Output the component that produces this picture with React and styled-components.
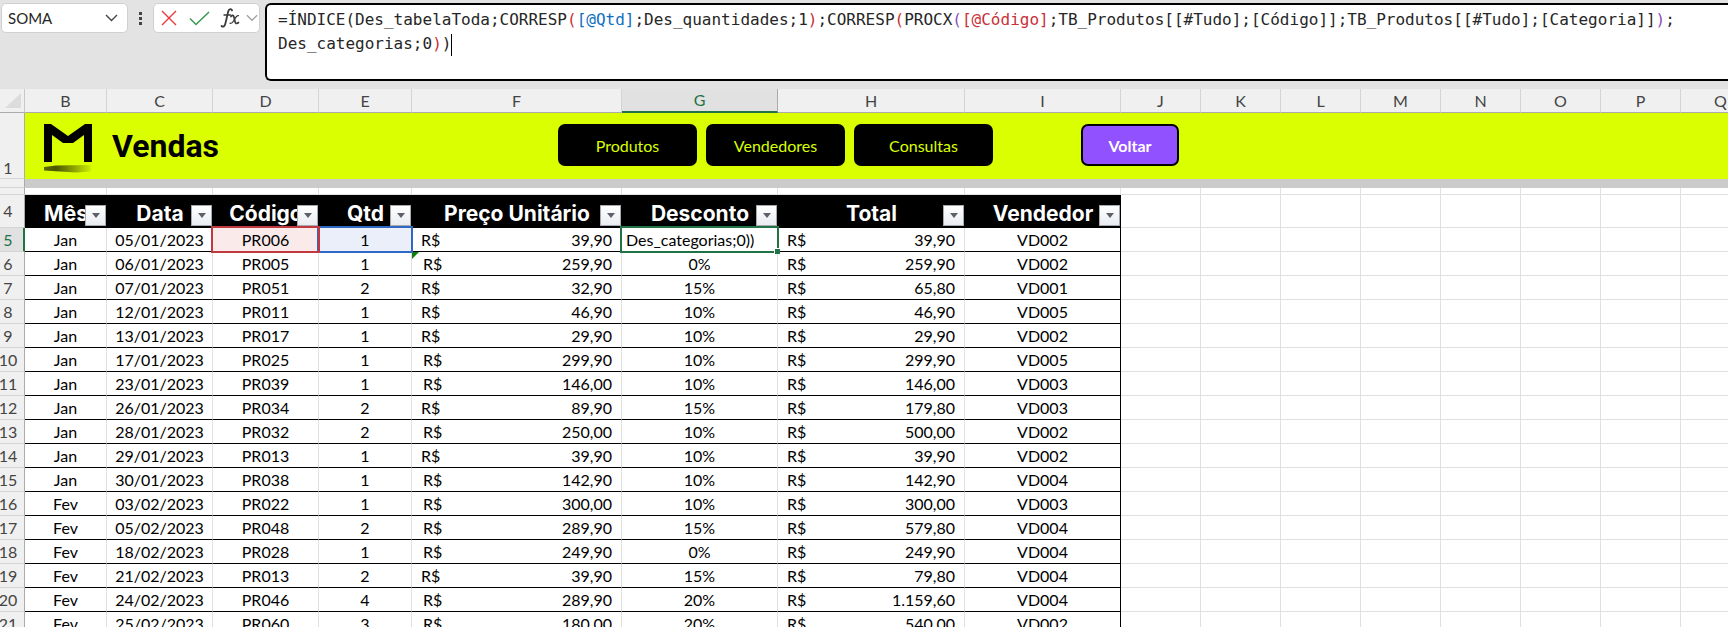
import React from "react";
import styled, { createGlobalStyle, css } from "styled-components";

const GlobalStyle = createGlobalStyle`
  * {
    box-sizing: border-box;
  }

  body {
    margin: 0;
    background: #fff;
    color: #000;
    font-family: Lato, "Open Sans", sans-serif;
    font-size: 16px;
    overflow: hidden;
  }

  button,
  input {
    margin: 0;
    padding: 0;
    border: 0;
    background: none;
    color: inherit;
    font: inherit;
    outline: none;
  }
`;

const Page = styled.div`
  height: 100vh;
  overflow: hidden;
`;

/* formula bar */

const FormulaBar = styled.header`
  display: flex;
  align-items: flex-start;
  height: 89px;
  padding: 3px 0 0 1px;
  background: #e3e3e3;
`;

const NameBox = styled.div`
  display: flex;
  align-items: center;
  width: 127px;
  height: 30px;
  padding: 0 8px 0 6px;
  border: 1px solid #d0d0d0;
  border-radius: 5px;
  background: #fff;
`;

const NameInput = styled.input`
  flex: 1;
  min-width: 0;
  color: #262626;
  font-size: 15px;
`;

const IconButton = styled.button`
  display: flex;
  align-items: center;
  justify-content: center;
  width: ${(props) => props.$width}px;
  height: 28px;
`;

const Grip = styled.div`
  display: flex;
  flex-direction: column;
  align-items: center;
  justify-content: center;
  gap: 2px;
  width: 25px;
  height: 30px;
`;

const GripDot = styled.span`
  width: 3px;
  height: 3px;
  background: #444;
`;

const Actions = styled.div`
  display: flex;
  align-items: center;
  width: 107px;
  height: 30px;
  border: 1px solid #d0d0d0;
  border-radius: 5px;
  background: #fff;
`;

/* each part of the formula has its own colour, which a textarea can't show */
const FormulaBox = styled.div`
  flex: 1;
  min-width: 0;
  height: 78px;
  margin-left: 5px;
  padding: 3px 0 0 11px;
  border: 2px solid #000;
  border-right: 0;
  border-radius: 6px 0 0 6px;
  background: #fff;
  color: #262626;
  font-family: "DejaVu Sans Mono", monospace;
  font-size: 16px;
  line-height: 24px;
  white-space: pre;
  outline: none;
  overflow: hidden;
`;

const Token = styled.span`
  color: ${(props) => props.$color};
`;

const Caret = styled.span`
  display: inline-block;
  width: 1px;
  height: 22px;
  background: #000;
  vertical-align: middle;
`;

/* sheet */

const Sheet = styled.table`
  width: 100%;
  table-layout: fixed;
  border-collapse: separate;
  border-spacing: 0;

  th,
  td {
    padding: 0;
  }
`;

const Col = styled.col`
  width: ${(props) => (props.$width ? `${props.$width}px` : "auto")};
`;

const Corner = styled.td`
  height: 24px;
  border-right: 1px solid #c8c8c8;
  border-bottom: 1px solid #ababab;
  background: #f0f0f0;
`;

const CornerIcon = styled.svg`
  display: block;
  margin-left: 5px;
`;

const ColHead = styled.th`
  height: 24px;
  border-right: 1px solid #d4d4d4;
  border-bottom: 1px solid #ababab;
  background: #f0f0f0;
  color: #444;
  font-weight: 400;
  line-height: 20px;
  text-align: center;

  ${(props) =>
    props.$active &&
    css`
      border-right-color: #ababab;
      border-bottom: 2px solid #217346;
      background: #e1e1e1;
      color: #217346;
    `}
`;

const RowHead = styled.th`
  border-right: 1px solid #ababab;
  border-bottom: 1px solid #d4d4d4;
  background: #f0f0f0;
  color: #444;
  font-weight: 400;
  line-height: 20px;
  text-align: center;
  vertical-align: ${(props) => props.$align || "middle"};

  ${(props) =>
    props.$active &&
    css`
      border-right: 2px solid #217346;
      background: #e1e1e1;
      color: #217346;
    `}
`;

const RowNumber = styled.span`
  display: flex;
  justify-content: center;
  width: 16px;
`;

const BannerCell = styled.td`
  height: 66px;
  background: #d9ff00;
`;

const Banner = styled.div`
  display: flex;
  align-items: flex-start;
  height: 66px;
  padding: 11px 0 0 19px;
`;

const Brand = styled.div`
  display: flex;
  align-items: flex-start;
  gap: 20px;
  width: 514px;
`;

const Title = styled.h1`
  margin: 0;
  font-family: Roboto, sans-serif;
  font-size: 32px;
  font-weight: 700;
  line-height: 44px;
`;

const Nav = styled.nav`
  display: flex;
  gap: 9px;
`;

const NavButton = styled.button`
  width: 139px;
  height: 42px;
  border-radius: 7px;
  background: #000;
  color: #d9ff00;
`;

const BackButton = styled.button`
  width: 98px;
  height: 42px;
  margin-left: 88px;
  border: 2px solid #000;
  border-radius: 7px;
  background: #9251ff;
  color: #fff;
  font-weight: 700;
`;

const Divider = styled.td`
  height: 9px;
  background: #cbcbcb;
`;

const Blank = styled.td`
  height: ${(props) => props.$height || 24}px;
  border-right: 1px solid #e0e0e0;
  border-bottom: 1px solid #e0e0e0;
`;

const FieldHead = styled.th`
  height: 33px;
  background: #000;
  color: #fff;
`;

const Field = styled.div`
  display: grid;
  align-items: center;
  height: 33px;
`;

const FieldName = styled.span`
  grid-area: 1 / 1;
  justify-self: center;
  padding-top: 4px;
  font-family: Inter, sans-serif;
  font-size: 21px;
  font-weight: 700;
  line-height: 24px;
  white-space: nowrap;
`;

const FilterButton = styled.button`
  display: flex;
  grid-area: 1 / 1;
  align-items: center;
  align-self: end;
  justify-content: center;
  justify-self: end;
  width: 21px;
  height: 21px;
  margin: 0 1px 2px 0;
  border: 1px solid #a5a9b0;
  background: linear-gradient(#fff, #e9ecf1);
`;

const Cell = styled.td`
  position: relative;
  height: 24px;
  border-right: 1px solid ${(props) => (props.$last ? "#000" : "#e0e0e0")};
  border-bottom: 1px solid #000;
  background: ${(props) => props.$fill || "#fff"};
  line-height: 20px;
  text-align: center;
  white-space: nowrap;

  ${(props) =>
    props.$frame &&
    css`
      &::after {
        content: "";
        position: absolute;
        z-index: ${props.$layer || 1};
        inset: -2px;
        border: 2px solid ${props.$frame};
        pointer-events: none;
      }
    `}
`;

const Money = styled.div`
  display: flex;
  justify-content: space-between;
  padding: 0 9px 0 ${(props) => (props.$wide ? 11 : 9)}px;
`;

const CellInput = styled.input`
  display: block;
  width: 100%;
  height: 20px;
  padding-left: 4px;
`;

const FillHandle = styled.span`
  position: absolute;
  z-index: 2;
  right: -3px;
  bottom: -3px;
  width: 6px;
  height: 6px;
  border: solid #fff;
  border-width: 1px 0 0 1px;
  background: #217346;
`;

const ErrorMark = styled.svg`
  position: absolute;
  top: 0;
  left: 0;
`;

const columns = [
  ["B", 82],
  ["C", 106],
  ["D", 106],
  ["E", 93],
  ["F", 210],
  ["G", 156],
  ["H", 187],
  ["I", 156],
  ["J", 80],
  ["K", 80],
  ["L", 80],
  ["M", 80],
  ["N", 80],
  ["O", 80],
  ["P", 80],
  ["Q", 80],
];

const spare = ["J", "K", "L", "M", "N", "O", "P", "Q", "rest"];

const fields = ["Mês", "Data", "Código", "Qtd", "Preço Unitário", "Desconto", "Total", "Vendedor"];

const sales = [
  ["Jan", "05/01/2023", "PR006", "1", "39,90", "", "39,90", "VD002"],
  ["Jan", "06/01/2023", "PR005", "1", "259,90", "0%", "259,90", "VD002"],
  ["Jan", "07/01/2023", "PR051", "2", "32,90", "15%", "65,80", "VD001"],
  ["Jan", "12/01/2023", "PR011", "1", "46,90", "10%", "46,90", "VD005"],
  ["Jan", "13/01/2023", "PR017", "1", "29,90", "10%", "29,90", "VD002"],
  ["Jan", "17/01/2023", "PR025", "1", "299,90", "10%", "299,90", "VD005"],
  ["Jan", "23/01/2023", "PR039", "1", "146,00", "10%", "146,00", "VD003"],
  ["Jan", "26/01/2023", "PR034", "2", "89,90", "15%", "179,80", "VD003"],
  ["Jan", "28/01/2023", "PR032", "2", "250,00", "10%", "500,00", "VD002"],
  ["Jan", "29/01/2023", "PR013", "1", "39,90", "10%", "39,90", "VD002"],
  ["Jan", "30/01/2023", "PR038", "1", "142,90", "10%", "142,90", "VD004"],
  ["Fev", "03/02/2023", "PR022", "1", "300,00", "10%", "300,00", "VD003"],
  ["Fev", "05/02/2023", "PR048", "2", "289,90", "15%", "579,80", "VD004"],
  ["Fev", "18/02/2023", "PR028", "1", "249,90", "0%", "249,90", "VD004"],
  ["Fev", "21/02/2023", "PR013", "2", "39,90", "15%", "79,80", "VD004"],
  ["Fev", "24/02/2023", "PR046", "4", "289,90", "20%", "1.159,60", "VD004"],
  ["Fev", "25/02/2023", "PR060", "3", "180,00", "20%", "540,00", "VD002"],
];

const RED = "#c93038";
const BLUE = "#1070c0";
const PURPLE = "#8a50b8";

const formula = [
  ["=ÍNDICE(Des_tabelaToda;CORRESP"],
  ["(", RED],
  ["[@Qtd]", BLUE],
  [";Des_quantidades;1"],
  [")", RED],
  [";CORRESP"],
  ["(", RED],
  ["PROCX"],
  ["(", PURPLE],
  ["[@Código]", RED],
  [";TB_Produtos[[#Tudo];[Código]];TB_Produtos[[#Tudo];[Categoria]]"],
  [")", PURPLE],
  [";\nDes_categorias;0"],
  [")", RED],
  [")"],
];

function Chevron({ color, width = 13 }) {
  return (
    <svg width={width} height="8" viewBox="0 0 13 8" fill="none" stroke={color} strokeWidth="1.4">
      <path d="M1 1l5.5 5.5L12 1" />
    </svg>
  );
}

function Logo() {
  return (
    <svg width="48" height="50" viewBox="0 0 48 50">
      <defs>
        <linearGradient id="shade" x1="0" x2="1" y1="0" y2="0">
          <stop offset="0" stopColor="#5c6c00" />
          <stop offset="0.25" stopColor="#4a5700" />
          <stop offset="0.7" stopColor="#96b000" />
          <stop offset="1" stopColor="#cdf000" />
        </linearGradient>
      </defs>
      <path d="M0 0h7l17 12L41 0h7v38h-8V11L29 19H19L8 11v27H0z" />
      <path d="M0 43L12 41.500 47 41v6.500L32 48.500 0 46.500z" fill="url(#shade)" />
    </svg>
  );
}

function SaleCell({ column, value, first }) {
  if (column === 4 || column === 6) {
    return (
      <Cell>
        <Money $wide={column === 4 && value.length > 5}>
          <span>R$</span>
          <span>{value}</span>
        </Money>
        {column === 4 && value === "259,90" && (
          <ErrorMark width="7" height="7" viewBox="0 0 7 7">
            <path d="M0 0h7L0 7z" fill="#0a800a" />
          </ErrorMark>
        )}
      </Cell>
    );
  }
  if (first && column === 5) {
    return (
      <Cell $frame="#217346">
        <CellInput aria-label="G5" defaultValue="Des_categorias;0))" />
        <FillHandle />
      </Cell>
    );
  }
  if (first && column === 2) {
    return (
      <Cell $frame="#c0393f" $fill="#faeaea" $layer={2}>
        {value}
      </Cell>
    );
  }
  if (first && column === 3) {
    return (
      <Cell $frame="#2e68c4" $fill="#eaeff9">
        {value}
      </Cell>
    );
  }
  return <Cell $last={column === 7}>{value}</Cell>;
}

function App() {
  return (
    <Page>
      <GlobalStyle />
      <FormulaBar>
        <NameBox>
          <NameInput aria-label="Caixa de nome" defaultValue="SOMA" />
          <IconButton $width={15} aria-label="Abrir nomes">
            <Chevron color="#444" />
          </IconButton>
        </NameBox>
        <Grip>
          <GripDot />
          <GripDot />
          <GripDot />
        </Grip>
        <Actions>
          <IconButton $width={30} aria-label="Cancelar">
            <svg width="16" height="16" viewBox="0 0 16 16" stroke="#e8383d" strokeWidth="1.4">
              <path d="M1 1l14 14M15 1L1 15" />
            </svg>
          </IconButton>
          <IconButton $width={30} aria-label="Inserir">
            <svg width="21" height="15" viewBox="0 0 21 15" fill="none" stroke="#3a9a55" strokeWidth="1.6">
              <path d="M1 7.5l6 6L20 1" />
            </svg>
          </IconButton>
          <IconButton $width={31} aria-label="Inserir função">
            <svg width="20" height="22" viewBox="0 0 20 22" fill="none" stroke="#3b3b3b" strokeLinecap="round">
              <path d="M12 3.4C11.4 1.6 9 1.6 8.2 4.5L5.4 16.5C4.7 19.5 3 20.3 1.5 19" strokeWidth="1.8" />
              <path d="M4 8h6.5" strokeWidth="1.4" />
              <path d="M11 9.5C13.2 7 13.8 9 14.3 11.5C15 15.5 15.7 18 18.5 15.5" strokeWidth="1.7" />
              <path d="M18.5 8.6C16.5 8 15 11.5 13.8 13.5C12.6 15.7 11.6 17 10 16.2" strokeWidth="1.2" />
            </svg>
          </IconButton>
          <IconButton $width={14} aria-label="Mais funções">
            <Chevron color="#a0a0a0" width={12} />
          </IconButton>
        </Actions>
        <FormulaBox
          role="textbox"
          aria-multiline="true"
          aria-label="Barra de fórmulas"
          contentEditable
          suppressContentEditableWarning
          spellCheck={false}
        >
          {formula.map(([text, color], i) => (
            <Token key={i} $color={color}>
              {text}
            </Token>
          ))}
          <Caret />
        </FormulaBox>
      </FormulaBar>

      <Sheet>
        <colgroup>
          <Col $width={25} />
          {columns.map(([name, width]) => (
            <Col key={name} $width={width} />
          ))}
          <Col />
        </colgroup>
        <thead>
          <tr>
            <Corner>
              <CornerIcon width="17" height="16" viewBox="0 0 17 16">
                <path d="M16 0v15H0z" fill="#dcdcdc" />
              </CornerIcon>
            </Corner>
            {columns.map(([name]) => (
              <ColHead key={name} scope="col" $active={name === "G"}>
                {name}
              </ColHead>
            ))}
            <ColHead as="td" />
          </tr>
        </thead>
        <tbody>
          <tr>
            <RowHead scope="row" $align="bottom">
              <RowNumber>1</RowNumber>
            </RowHead>
            <BannerCell colSpan={17}>
              <Banner>
                <Brand>
                  <Logo />
                  <Title>Vendas</Title>
                </Brand>
                <Nav>
                  <NavButton>Produtos</NavButton>
                  <NavButton>Vendedores</NavButton>
                  <NavButton>Consultas</NavButton>
                </Nav>
                <BackButton>Voltar</BackButton>
              </Banner>
            </BannerCell>
          </tr>
          <tr>
            <RowHead as="td" />
            <Divider colSpan={17} />
          </tr>
          <tr>
            <RowHead as="td" />
            {[...fields, ...spare].map((name) => (
              <Blank key={name} $height={7} />
            ))}
          </tr>
          <tr>
            <RowHead scope="row">
              <RowNumber>4</RowNumber>
            </RowHead>
            {fields.map((name) => (
              <FieldHead key={name} scope="col">
                <Field>
                  <FieldName>{name}</FieldName>
                  <FilterButton aria-label={`Filtrar ${name}`}>
                    <svg width="8" height="5" viewBox="0 0 8 5">
                      <path d="M0 0h8L4 5z" fill="#5c6068" />
                    </svg>
                  </FilterButton>
                </Field>
              </FieldHead>
            ))}
            {spare.map((name) => (
              <Blank key={name} />
            ))}
          </tr>
          {sales.map((sale, i) => (
            <tr key={i}>
              <RowHead scope="row" $active={i === 0}>
                <RowNumber>{i + 5}</RowNumber>
              </RowHead>
              {sale.map((value, column) => (
                <SaleCell key={column} column={column} value={value} first={i === 0} />
              ))}
              {spare.map((name) => (
                <Blank key={name} />
              ))}
            </tr>
          ))}
        </tbody>
      </Sheet>
    </Page>
  );
}

export default App;
